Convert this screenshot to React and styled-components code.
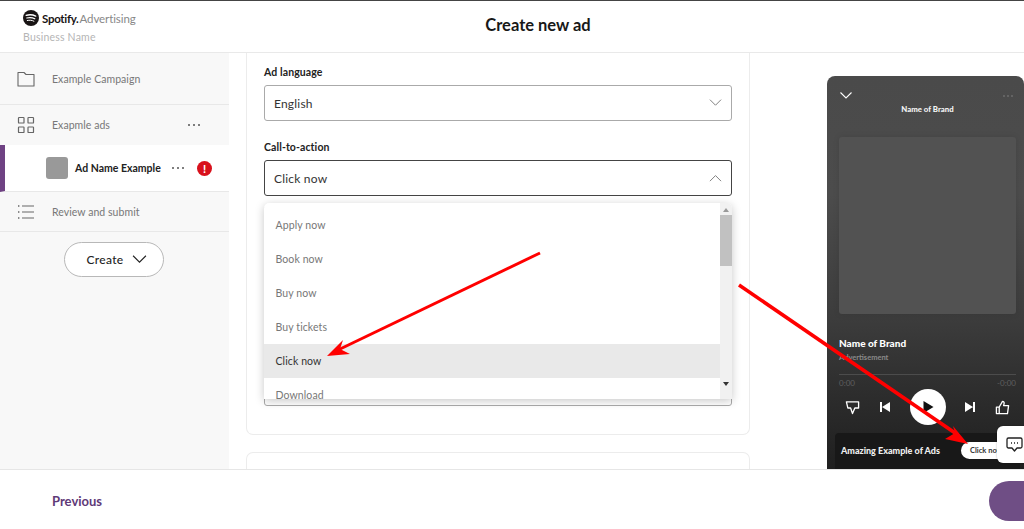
import React from 'react';
import styled, { createGlobalStyle } from 'styled-components';

const Global = createGlobalStyle`
  html, body { margin: 0; padding: 0; background: #fff; }
  body { font-family: Lato, "Open Sans", "Liberation Sans", sans-serif; }
  * { box-sizing: border-box; }
`;
const Page = styled.div`
  position: relative; width: 1024px; height: 529px; overflow: hidden;
  display: flex; flex-direction: column; border-top: 1px solid #444; background: #fff;
`;
const Header = styled.header`
  height: 52px; flex: none; position: relative; display: flex; align-items: center; justify-content: center;
  border-bottom: 1px solid #e9e9e9; padding-left: 52px;
`;
const Brand = styled.div`
  position: absolute; left: 23px; top: 8px; display: flex; flex-direction: column; gap: 4px;
`;
const LogoRow = styled.div`display: flex; align-items: center; gap: 3px; height: 18px;`;
const LogoWord = styled.span`font-size: 11.5px; font-weight: 700; color: #191414; letter-spacing: -0.3px;`;
const LogoSub = styled.span`font-size: 11.5px; color: #888; margin-left: -2px; letter-spacing: -0.1px;`;
const BusinessName = styled.span`font-size: 10.5px; color: #b5b5b5; letter-spacing: 0.2px;`;
const Title = styled.h1`margin: 0; font-size: 16.5px; font-weight: 700; color: #181818; position: relative; top: -2px;`;

const Body = styled.div`flex: 1; display: flex; min-height: 0; overflow: hidden;`;
const Sidebar = styled.nav`width: 229px; flex: none; background: #f8f8f8; display: flex; flex-direction: column;`;
const NavRow = styled.div`
  height: ${p => p.$h}px; flex: none; display: flex; align-items: center; padding-left: 17px;
  border-bottom: 1px solid #e8e8e8; color: #777; font-size: 10.5px; letter-spacing: 0.05px; position: relative;
  ${p => p.$noBorder ? 'border-bottom: none;' : ''}
`;
const NavIcon = styled.span`width: 18px; height: 18px; display: flex; margin-right: 17px; color: #666;`;
const Dots = styled.span`
  position: absolute; left: ${p => p.$x}px; top: 50%; transform: translateY(-50%); display: flex; gap: 3px;
  & > i { width: 2px; height: 2px; border-radius: 50%; background: ${p => p.$c || '#555'}; display: block; }
`;
const AdRow = styled.div`
  height: 47px; flex: none; background: #fff; border-left: 5px solid #6f4283; display: flex; align-items: center;
  padding-left: 41px; position: relative; border-bottom: 1px solid #e8e8e8;
`;
const Thumb = styled.span`width: 22px; height: 22px; border-radius: 3px; background: #999; margin-right: 7px;`;
const AdName = styled.span`font-size: 10.5px; font-weight: 700; color: #222; letter-spacing: 0;`;
const Alert = styled.span`
  position: absolute; left: 192px; top: 16px; width: 15px; height: 15px; border-radius: 50%; background: #d8111c;
  color: #fff; font-size: 11px; font-weight: 900; display: flex; align-items: center; justify-content: center;
`;
const CreateBtn = styled.button`
  align-self: flex-start; margin: 10px 0 0 64px; width: 100px; height: 35px; border-radius: 18px;
  border: 1px solid #b8b8b8; background: #fff; display: flex; align-items: center; justify-content: center; gap: 9px;
  font: 500 12px Lato, sans-serif; color: #222; letter-spacing: 0.3px; padding: 0 0 0 6px;
`;

const Main = styled.main`width: 521px; flex: none; padding-left: 17px; display: flex; flex-direction: column; gap: 17px;`;
const Card = styled.section`
  width: 504px; height: 382px; flex: none; border: 1px solid #ececec; border-top: none; border-radius: 0 0 7px 7px;
  padding: 12px 17px 0; display: flex; flex-direction: column; position: relative;
`;
const NextCard = styled.section`
  width: 504px; height: 30px; flex: none; border: 1px solid #ececec; border-bottom: none; border-radius: 7px 7px 0 0;
`;
const Label = styled.label`font-size: 10.5px; font-weight: 700; color: #222; line-height: 14px; letter-spacing: 0.1px; margin-bottom: 6px;`;
const Select = styled.div`
  width: 468px; height: ${p => p.$h || 36}px; flex: none; border: 1px solid ${p => p.$open ? '#444' : '#aaa'}; border-radius: 3px;
  display: flex; align-items: center; justify-content: space-between; padding: 0 9px 0 9px;
  font-size: 12px; color: #333; letter-spacing: 0.2px; margin-bottom: ${p => p.$mb || 0}px; margin-top: ${p => p.$mt || 0}px;
`;
const Dropdown = styled.div`
  position: absolute; left: 17px; top: 150px; width: 468px; height: 196px; background: #fff; border-radius: 5px 5px 0 0;
  box-shadow: 0 2px 10px rgba(0,0,0,.22); overflow: hidden; display: flex;
`;
const Options = styled.ul`list-style: none; margin: 0; padding: 5px 0 0; flex: 1; min-width: 0;`;
const Option = styled.li`
  height: 34px; display: flex; align-items: center; padding-left: 11.5px; font-size: 10.5px; letter-spacing: 0.1px;
  color: ${p => p.$active ? '#333' : '#777'}; background: ${p => p.$active ? '#e9e9e9' : '#fff'};
`;
const Track = styled.div`width: 12px; flex: none; background: #f1f1f1; display: flex; flex-direction: column; align-items: center; padding-top: 5px;`;
const Thumbbar = styled.div`width: 12px; height: 51px; background: #c1c1c1; margin-top: 3px;`;
const ArrowUp = styled.span`width: 0; height: 0; border: 3px solid transparent; border-top: 0; border-bottom: 4px solid #999;`;
const ArrowDown = styled.span`width: 0; height: 0; border: 3px solid transparent; border-bottom: 0; border-top: 4px solid #333; margin-top: 116px;`;

const Preview = styled.aside`flex: 1; min-width: 0; padding: 23px 0 0 77px; overflow: hidden;`;
const Phone = styled.div`
  width: 197px; height: 393px; border-radius: 8px 8px 0 0; color: #fff; padding: 0 8px 0 12px;
  background: linear-gradient(180deg, #4a4a4a 0%, #4c4c4c 30%, #3c3c3c 62%, #2c2c2c 82%, #1f1f1f 100%);
  display: flex; flex-direction: column; position: relative;
`;
const PhoneTop = styled.div`height: 61px; flex: none; display: flex; flex-direction: column; align-items: center; padding-top: 16px;`;
const PhoneBar = styled.div`height: 7px; width: 175px; display: flex; align-items: center; justify-content: space-between; margin-bottom: 5px;`;
const PhoneDots = styled.span`
  display: flex; gap: 2px; margin-right: 2px;
  & > i { width: 2px; height: 2px; border-radius: 50%; background: #6c6c6c; display: block; }
`;
const PhoneBrandTop = styled.span`font-size: 7.8px; font-weight: 900; line-height: 10px; color: #f4f4f4;`;
const Art = styled.div`width: 177px; height: 177px; flex: none; background: #525252; border-radius: 3px; box-shadow: 0 0 6px rgba(0,0,0,.1);`;
const TrackName = styled.div`font-size: 10px; font-weight: 900; margin-top: 23px; line-height: 13px;`;
const Ad = styled.div`font-size: 7.5px; color: #8a8a8a; font-weight: 700; margin-top: 3px; line-height: 10px;`;
const Progress = styled.div`height: 1px; background: #4c4c4c; margin-top: 11px; width: 177px;`;
const Times = styled.div`display: flex; justify-content: space-between; width: 177px; font-size: 8px; color: #5f5f5f; margin-top: 4px; line-height: 9px;`;
const Controls = styled.div`display: flex; align-items: center; justify-content: space-between; width: 165px; height: 36px; margin: 1px 0 0 6px;`;
const PlayBtn = styled.span`width: 36px; height: 36px; border-radius: 50%; background: #fff; display: flex; align-items: center; justify-content: center;`;
const Banner = styled.div`
  position: absolute; left: 8px; right: 4px; bottom: 0; height: 36px; background: #181818; border-radius: 4px 4px 0 0;
  display: flex; align-items: center; padding: 0 0 2px 6px; font-size: 9px; font-weight: 900; color: #eee;
`;
const Cta = styled.span`
  position: absolute; left: 126px; top: 9px; width: 60px; height: 17px; background: #fff; border-radius: 9px; color: #333;
  font-size: 7.5px; font-weight: 700; display: flex; align-items: center; padding-left: 9px; white-space: nowrap;
`;
const Footer = styled.footer`
  height: 60px; flex: none; border-top: 1px solid #e6e6e6; background: #fff; position: relative; display: flex; align-items: center; padding-left: 52px;
`;
const Previous = styled.span`font-size: 13px; font-weight: 700; color: #5f3a78; position: relative; top: 1px;`;
const NextBtn = styled.span`position: absolute; left: 989px; top: 11px; width: 80px; height: 40px; border-radius: 20px; background: #6f4e85;`;
const Chat = styled.div`
  position: absolute; left: 997px; top: 425px; width: 30px; height: 37px; background: #fff; border-radius: 6px 0 0 6px;
  display: flex; align-items: center; padding-left: 9px; box-shadow: 0 0 2px rgba(0,0,0,.3);
`;
const Overlay = styled.svg`position: absolute; left: 0; top: 0; pointer-events: none;`;

const D = ({ x, c }) => <Dots $x={x} $c={c}><i /><i /><i /></Dots>;
const Chev = ({ up, c = '#777', w = 13 }) => (
  <svg width={w} height={w * 0.6} viewBox="0 0 14 8" fill="none" stroke={c} strokeWidth="1">
    <path d={up ? 'M1 7.5 7 1.5l6 6' : 'M1 .5l6 6 6-6'} />
  </svg>
);
const opts = ['Apply now', 'Book now', 'Buy now', 'Buy tickets', 'Click now', 'Download'];

export default function App() {
  return (
    <Page>
      <Global />
      <Header>
        <Brand>
          <LogoRow>
            <svg width="16" height="16" viewBox="0 0 16 16">
              <circle cx="8" cy="8" r="8" fill="#191414" />
              <g fill="none" stroke="#fff" strokeLinecap="round">
                <path d="M3.2 5.3c3-.9 6.6-.7 9.5.8" strokeWidth="1.4" />
                <path d="M3.8 8c2.6-.7 5.6-.5 8 .8" strokeWidth="1.2" />
                <path d="M4.3 10.5c2.2-.5 4.6-.4 6.6.7" strokeWidth="1" />
              </g>
            </svg>
            <LogoWord>Spotify.</LogoWord><LogoSub>Advertising</LogoSub>
          </LogoRow>
          <BusinessName>Business Name</BusinessName>
        </Brand>
        <Title>Create new ad</Title>
      </Header>
      <Body>
        <Sidebar>
          <NavRow $h={52}>
            <NavIcon>
              <svg width="18" height="18" viewBox="0 0 18 18" fill="none" stroke="#666" strokeWidth="1.1">
                <path d="M1 2.5h6l2 2h8V16H1z" strokeLinejoin="round" />
              </svg>
            </NavIcon>
            Example Campaign
          </NavRow>
          <NavRow $h={40} $noBorder>
            <NavIcon>
              <svg width="18" height="18" viewBox="0 0 18 18" fill="none" stroke="#666" strokeWidth="1.2">
                <rect x="1.5" y="1.5" width="5.5" height="5.5" rx=".6" /><rect x="11" y="1.5" width="5.5" height="5.5" rx=".6" />
                <rect x="1.5" y="11" width="5.5" height="5.5" rx=".6" /><rect x="11" y="11" width="5.5" height="5.5" rx=".6" />
              </svg>
            </NavIcon>
            Exapmle ads
            <D x={188} />
          </NavRow>
          <AdRow>
            <Thumb /><AdName>Ad Name Example</AdName>
            <D x={167} />
            <Alert>!</Alert>
          </AdRow>
          <NavRow $h={40}>
            <NavIcon>
              <svg width="18" height="18" viewBox="0 0 18 18" fill="none" stroke="#666" strokeWidth="1.1">
                <path d="M5 3h12M5 9h12M5 15h12" />
                <path d="M1 3h1.4M1 9h1.4M1 15h1.4" strokeWidth="1.4" />
              </svg>
            </NavIcon>
            Review and submit
          </NavRow>
          <CreateBtn>Create <Chev c="#222" w={15} /></CreateBtn>
        </Sidebar>
        <Main>
          <Card>
            <Label>Ad language</Label>
            <Select $mb={19}>English <Chev /></Select>
            <Label>Call-to-action</Label>
            <Select $open>Click now <Chev up /></Select>
            <Select $h={200} $mt={10} />
            <Dropdown>
              <Options>
                {opts.map(o => <Option key={o} $active={o === 'Click now'}>{o}</Option>)}
              </Options>
              <Track><ArrowUp /><Thumbbar /><ArrowDown /></Track>
            </Dropdown>
          </Card>
          <NextCard />
        </Main>
        <Preview>
          <Phone>
            <PhoneTop>
              <PhoneBar>
                <svg width="12" height="7" viewBox="0 0 12 7" fill="none" stroke="#fff" strokeWidth="1.1"><path d="M.5.5l5.5 5.5L11.5.5" /></svg>
                <PhoneDots><i /><i /><i /></PhoneDots>
              </PhoneBar>
              <PhoneBrandTop>Name of Brand</PhoneBrandTop>
            </PhoneTop>
            <Art />
            <TrackName>Name of Brand</TrackName>
            <Ad>Advertisement</Ad>
            <Progress />
            <Times><span>0:00</span><span>-0:00</span></Times>
            <Controls>
              <svg width="15" height="15" viewBox="0 0 16 16" fill="none" stroke="#fff" strokeWidth="1.4" strokeLinejoin="round">
                <path d="M1.5 2h13v6.5h-4L8 14.5 6 8.5H3z" />
              </svg>
              <svg width="12" height="12" viewBox="0 0 12 12" fill="#fff"><path d="M1 1h2v10H1zM11 1v10L3 6z" /></svg>
              <PlayBtn>
                <svg width="12" height="12" viewBox="0 0 12 12" fill="#111"><path d="M1.5 0 11.5 6l-10 6z" /></svg>
              </PlayBtn>
              <svg width="12" height="12" viewBox="0 0 12 12" fill="#fff"><path d="M9 1h2v10H9zM1 1v10l8-5z" /></svg>
              <svg width="15" height="15" viewBox="0 0 16 16" fill="none" stroke="#fff" strokeWidth="1.4" strokeLinejoin="round">
                <path d="M1.5 7.5h3v7h-3zM4.5 7.5 8 1.5c1.5 0 2 1 1.7 2.3L9.2 6h5.3l-1.2 8.5H4.5" />
              </svg>
            </Controls>
            <Banner>
              Amazing Example of Ads
              <Cta>Click now</Cta>
            </Banner>
          </Phone>
        </Preview>
      </Body>
      <Footer>
        <Previous>Previous</Previous>
        <NextBtn />
      </Footer>
      <Chat>
        <svg width="17" height="17" viewBox="0 0 17 17" fill="none" stroke="#222" strokeWidth="1.3" strokeLinejoin="round">
          <path d="M2.5 2h12a1.5 1.5 0 0 1 1.5 1.5v7a1.5 1.5 0 0 1-1.5 1.5h-3.5l-2.5 3-2.5-3H2.5A1.5 1.5 0 0 1 1 10.5v-7A1.5 1.5 0 0 1 2.5 2z" />
          <path d="M5 7h1M8 7h1M11 7h1" strokeWidth="1.5" />
        </svg>
      </Chat>
      <Overlay width="1024" height="529" viewBox="0 0 1024 529">
        <path d="M540 252 338 349" stroke="#f00" strokeWidth="3" fill="none" />
        <path d="M327 355 343 339 340 348 350 353z" fill="#f00" />
        <path d="M739 284 958 434" stroke="#f00" strokeWidth="3.6" fill="none" />
        <path d="M968 443 945 438 955 432 953 425z" fill="#f00" />
      </Overlay>
    </Page>
  );
}
